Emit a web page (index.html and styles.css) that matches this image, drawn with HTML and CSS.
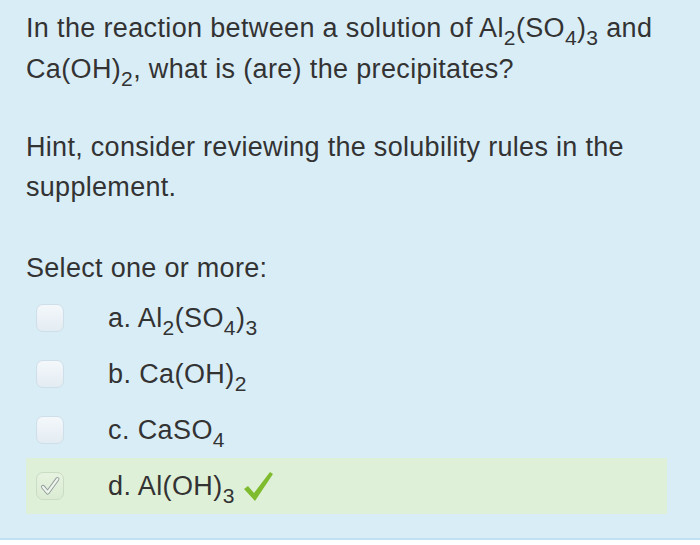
FILE: index.html
```html
<!DOCTYPE html>
<html>
<head>
<meta charset="utf-8">
<link rel="stylesheet" href="styles.css">
</head>
<body>
<div class="formulation">
  <div class="qtext">
    <p class="question">In the reaction between a solution of Al<sub>2</sub>(SO<sub>4</sub>)<sub>3</sub> and Ca(OH)<sub>2</sub>, what is (are) the precipitates?</p>
    <p class="hint">Hint, consider reviewing the solubility rules in the supplement.</p>
  </div>
  <div class="ablock">
    <div class="prompt">Select one or more:</div>
    <div class="answer">
      <div class="opt"><span class="box"></span><span class="label">a. Al<sub>2</sub>(SO<sub>4</sub>)<sub>3</sub></span></div>
      <div class="opt"><span class="box"></span><span class="label">b. Ca(OH)<sub>2</sub></span></div>
      <div class="opt"><span class="box"></span><span class="label">c. CaSO<sub>4</sub></span></div>
      <div class="opt correct"><span class="box checked"><svg viewBox="0 0 28 28" width="28" height="28"><path d="M6.5 15 L11.5 21 L22 6.5" fill="none" stroke="#939c9f" stroke-width="4.4" stroke-linecap="round" stroke-linejoin="round"/><path d="M6.5 15 L11.5 21 L22 6.5" fill="none" stroke="#eef5eb" stroke-width="2.4" stroke-linecap="round" stroke-linejoin="round"/></svg></span><span class="label">d. Al(OH)<sub>3</sub></span><svg class="tick" viewBox="0 0 30 32" width="30" height="32"><path d="M1 18 L5 15 L11 22 L27 1 L30 3 L12 30 Z" fill="#7fbb2e"/></svg></div>
    </div>
  </div>
</div>
</body>
</html>
```
FILE: styles.css
```css
html, body {
  margin: 0;
  padding: 0;
  background: #ffffff;
}
body {
  font-family: "Liberation Sans", Arial, sans-serif;
  color: #333333;
}
.formulation {
  background: #d9edf7;
  height: 540px;
  box-sizing: border-box;
  padding: 8px 33px 0 26px;
  border-bottom: 2px solid #bfe1f2;
}
.qtext p {
  margin: 0;
  font-size: 27px;
}
.question {
  line-height: 41px;
  letter-spacing: 0.35px;
}
.hint {
  line-height: 40px;
  letter-spacing: 0.3px;
  margin-top: 37px !important;
}
sub {
  font-size: 0.78em;
  line-height: 0;
  vertical-align: -0.36em;
}
.prompt {
  margin-top: 41px;
  font-size: 27px;
  line-height: 40px;
  letter-spacing: 0.3px;
}
.answer {
  display: flex;
  flex-direction: column;
  margin-top: 2px;
}
.opt {
  display: flex;
  align-items: center;
  height: 56px;
  padding-left: 10px;
  font-size: 27px;
  line-height: 56px;
  letter-spacing: 0.4px;
}
.box {
  width: 28px;
  height: 28px;
  box-sizing: border-box;
  border-radius: 7px;
  border: 1px solid #cfdfe9;
  background: linear-gradient(#f4f8fb, #e3ecf2);
  margin-right: 44px;
  flex: none;
  display: flex;
  align-items: center;
  justify-content: center;
  overflow: hidden;
}
.box.checked {
  background: linear-gradient(#e6f3e0, #dbecd3);
  border-color: #c9dcc4;
}
.correct {
  background: #dff0d8;
}
.tick {
  margin-left: 8px;
  margin-top: 2px;
}
```
